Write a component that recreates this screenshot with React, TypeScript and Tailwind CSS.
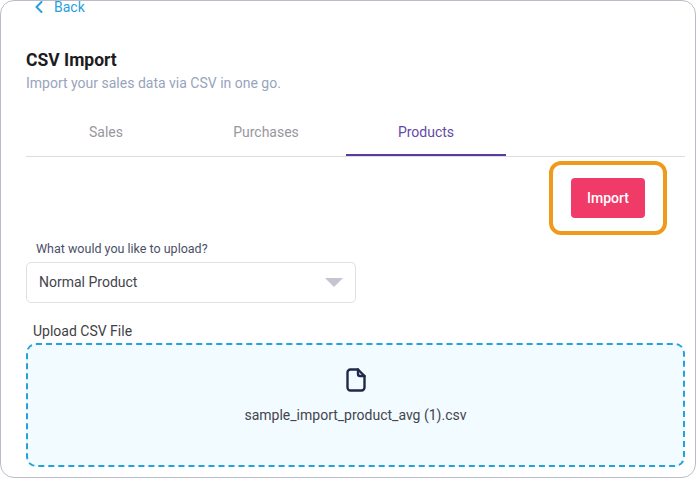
const TABS = ["Sales", "Purchases", "Products"];

function FileIcon() {
  return (
    <svg width="20" height="24" viewBox="0 0 20 24" fill="none" stroke="#1f2a48" strokeWidth="2.4" strokeLinejoin="round" strokeLinecap="round">
      <path d="M4 1.500h8L18.500 8V19.500a3 3 0 0 1-3 3H4.500a3 3 0 0 1-3-3V4.500a3 3 0 0 1 3-3Z" />
      <path d="M12 1.500V6a2 2 0 0 0 2 2h4.500" />
    </svg>
  );
}

export default function App() {
  return (
    <div className="w-[697px] h-[479px] overflow-hidden bg-white font-['Roboto',sans-serif]">
      <div className="w-[696px] h-[478px] overflow-hidden rounded-[14px] border border-[#bcbcc8] pl-[25px] pr-[10px]">
        <div className="h-[14px] -mt-[1px] flex items-center gap-[10px] pl-[8px] text-[14px] leading-[14px] text-[#2b9fdc]">
          <svg width="10" height="12" viewBox="0 0 10 12" fill="none" stroke="#2b9fdc" strokeWidth="2" strokeLinecap="round" strokeLinejoin="round">
            <path d="M7.500 1 L2.500 6 L7.500 11" />
          </svg>
          <span>Back</span>
        </div>

        <h1 className="mt-[35px] text-[17.500px] leading-[22px] font-bold text-[#1c1c22]">CSV Import</h1>
        <p className="mt-[2px] text-[14px] leading-[20px] text-[#98a4bd]">Import your sales data via CSV in one go.</p>

        <div className="mt-[14px] flex h-[50px] border-b border-[#dcdce2]">
          {TABS.map((t) => (
            <div
              key={t}
              className={
                t === "Products"
                  ? "w-[160px] h-[49px] border-b-2 border-[#5b3a9e] pt-[3px] flex items-center justify-center text-[14px] text-[#6449a8]"
                  : "w-[160px] h-[49px] pt-[2px] flex items-center justify-center text-[14px] text-[#97979d]"
              }
            >
              {t}
            </div>
          ))}
        </div>

        <div className="mt-[4px] flex justify-end pr-[18px]">
          <div className="rounded-[12px] border-4 border-[#ee9a1a] px-[18px] py-[13px]">
            <button className="w-[74px] h-[40px] rounded-[4px] bg-[#f03a68] text-[14px] font-medium text-white">Import</button>
          </div>
        </div>

        <label className="mt-[6px] block pl-[10px] text-[12.500px] leading-[16px] text-[#4b5068]">What would you like to upload?</label>
        <div className="mt-[5px] flex h-[41px] w-[330px] items-center justify-between rounded-[5px] border border-[#dfdfe4] pl-[12px] pr-[12px] text-[14px] text-[#44444c]">
          <span>Normal Product</span>
          <div className="h-0 w-0 border-x-[9px] border-t-[9px] border-x-transparent border-t-[#c4c5cf]" />
        </div>

        <div className="mt-[20px] pl-[7px] text-[14px] leading-[16px] text-[#3f3f46]">Upload CSV File</div>
        <div className="mt-[4px] flex h-[124px] w-[659px] flex-col items-center rounded-[10px] border-2 border-dashed border-[#22a3de] bg-[#f2fbff] pt-[23px]">
          <FileIcon />
          <div className="mt-[13px] text-[14px] leading-[20px] text-[#44444c]">sample_import_product_avg (1).csv</div>
        </div>
      </div>
    </div>
  );
}
